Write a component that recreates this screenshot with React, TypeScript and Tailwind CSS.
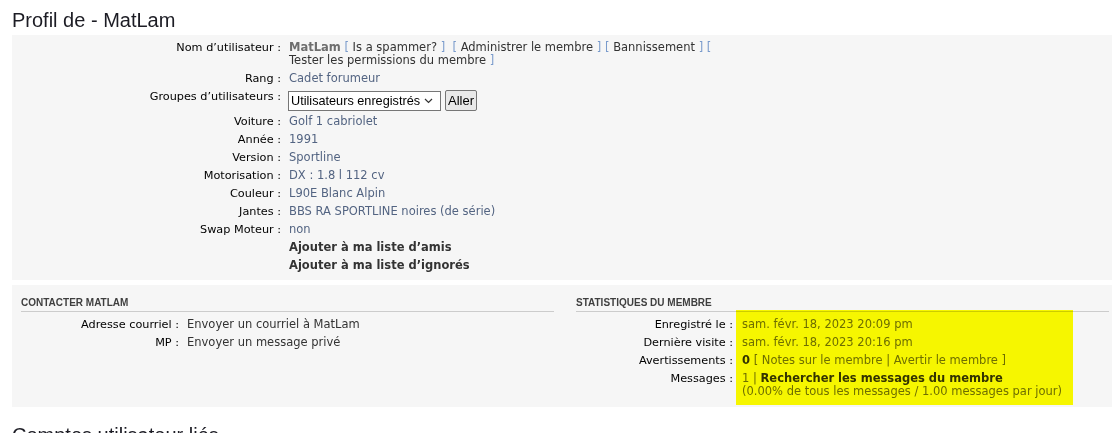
import React from "react";

type RowProps = {
  label?: string;
  labelWidth: string;
  gap: string;
  children: React.ReactNode;
};

function Row({ label, labelWidth, gap, children }: RowProps) {
  return (
    <div className="flex pt-[2px] pb-[3px] leading-[13px]">
      <dt className={`${labelWidth} shrink-0 text-right text-[11.25px] text-black`}>{label}</dt>
      <dd className={`${gap} whitespace-nowrap text-[11.5px]`}>{children}</dd>
    </div>
  );
}

const topRows: { label: string; value: string }[] = [
  { label: "Voiture :", value: "Golf 1 cabriolet" },
  { label: "Année :", value: "1991" },
  { label: "Version :", value: "Sportline" },
  { label: "Motorisation :", value: "DX : 1.8 l 112 cv" },
  { label: "Couleur :", value: "L90E Blanc Alpin" },
  { label: "Jantes :", value: "BBS RA SPORTLINE noires (de série)" },
  { label: "Swap Moteur :", value: "non" },
];

function Br({ children }: { children: React.ReactNode }) {
  return (
    <>
      <span className="text-[#7a9bcc]">[</span> <span className="text-[#333]">{children}</span>{" "}
      <span className="text-[#7a9bcc]">]</span>
    </>
  );
}

export default function App() {
  const top = { labelWidth: "w-[269px]", gap: "pl-[8px]" };
  const left = { labelWidth: "w-[158px]", gap: "pl-[8px]" };
  const right = { labelWidth: "w-[157px]", gap: "pl-[9px]" };

  return (
    <div className="w-[1112px] h-[433px] overflow-hidden bg-white pl-[12px] font-['DejaVu_Sans',sans-serif] text-[11px] text-[#333]">
      {/* Page title */}
      <h2 className="pt-[8px] mb-[3px] font-['Liberation_Sans',Arial,sans-serif] text-[20px] leading-[24px] text-[#1c1c24]">
        Profil de - MatLam
      </h2>

      {/* Profile details */}
      <div className="bg-[#f6f6f6] pt-[4px] pb-[5px]">
        <dl>
          <Row label="Nom d’utilisateur :" {...top}>
            <span className="font-bold text-[#6e6e6e]">MatLam</span> <Br>Is a spammer?</Br>
            {"\u00a0 "}
            <Br>Administrer le membre</Br> <Br>Bannissement</Br> <span className="text-[#7a9bcc]">[</span>
            <br />
            <span className="text-[#333]">Tester les permissions du membre</span>{" "}
            <span className="text-[#7a9bcc]">]</span>
          </Row>
          <Row label="Rang :" {...top}>
            <span className="text-[#536482]">Cadet forumeur</span>
          </Row>
          <div className="flex pt-[2px] pb-[2px] leading-[13px]">
            <dt className="w-[269px] shrink-0 text-right text-[11.25px] text-black">Groupes d’utilisateurs :</dt>
            <dd className="pl-[7px] flex items-start gap-[4px] font-['Liberation_Sans',Arial,sans-serif] text-[12.7px] text-black">
              <div className="mt-[1px] flex h-[20px] w-[153px] items-center justify-between border border-[#767676] bg-white pl-[2px] pr-[7px]">
                <span>Utilisateurs enregistrés</span>
                <svg width="9" height="6" viewBox="0 0 9 6" fill="none">
                  <path d="M1 1l3.5 3.5L8 1" stroke="#333" strokeWidth="1.2" />
                </svg>
              </div>
              <button className="flex h-[21px] w-[32px] items-center justify-center rounded-[2px] border border-[#767676] bg-[#e9e9e9] text-[13px] leading-none">
                Aller
              </button>
            </dd>
          </div>
          {topRows.map((r) => (
            <Row key={r.label} label={r.label} {...top}>
              <span className="text-[#536482]">{r.value}</span>
            </Row>
          ))}
          <Row {...top}>
            <span className="font-bold text-[#333]">Ajouter à ma liste d’amis</span>
          </Row>
          <Row {...top}>
            <span className="font-bold text-[#333]">Ajouter à ma liste d’ignorés</span>
          </Row>
        </dl>
      </div>

      {/* Contact + statistics */}
      <div className="relative mt-[5px] flex gap-[22px] bg-[#f6f6f6] pl-[9px] pt-[11px] pb-[6px]">
        <div className="w-[533px]">
          <h3 className="border-b border-[#cccccc] pb-[2px] font-['Liberation_Sans',Arial,sans-serif] text-[10px] font-bold uppercase leading-[13px] text-[#3f3f3f]">
            Contacter MatLam
          </h3>
          <dl className="mt-[4px]">
            <Row label="Adresse courriel :" {...left}>
              Envoyer un courriel à MatLam
            </Row>
            <Row label="MP :" {...left}>
              Envoyer un message privé
            </Row>
          </dl>
        </div>

        <div className="w-[533px]">
          <h3 className="border-b border-[#cccccc] pb-[2px] font-['Liberation_Sans',Arial,sans-serif] text-[10px] font-bold uppercase leading-[13px] text-[#3f3f3f]">
            Statistiques du membre
          </h3>
          <dl className="mt-[4px] text-[#6e6e6e]">
            <Row label="Enregistré le :" {...right}>
              sam. févr. 18, 2023 20:09 pm
            </Row>
            <Row label="Dernière visite :" {...right}>
              sam. févr. 18, 2023 20:16 pm
            </Row>
            <Row label="Avertissements :" {...right}>
              <span className="font-bold text-[#333]">0</span> [ Notes sur le membre | Avertir le membre ]
            </Row>
            <Row label="Messages :" {...right}>
              1 | <span className="font-bold text-[#333]">Rechercher les messages du membre</span>
              <br />
              (0.00% de tous les messages / 1.00 messages par jour)
            </Row>
          </dl>
        </div>

        {/* yellow highlight annotation */}
        <div className="pointer-events-none absolute left-[724px] top-[25px] h-[95px] w-[337px] bg-[#ffff00] mix-blend-multiply" />
      </div>

      <h2 className="mt-[16px] font-['Liberation_Sans',Arial,sans-serif] text-[20px] leading-[24px] text-[#1c1c24]">
        Comptes utilisateur liés
      </h2>
    </div>
  );
}
